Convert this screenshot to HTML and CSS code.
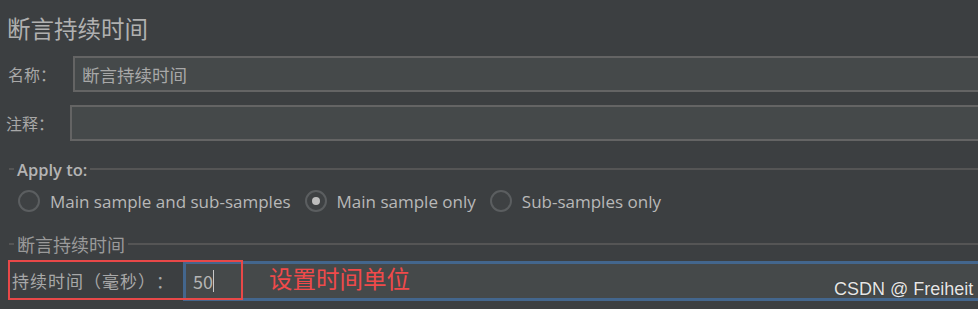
FILE: index.html
```html
<!DOCTYPE html>
<html>
<head>
<meta charset="utf-8">
<link rel="stylesheet" href="styles.css">
</head>
<body>
<div class="page">
  <div class="title">断言持续时间</div>
  <div class="row row-name">
    <span class="label">名称：</span>
    <div class="field">断言持续时间</div>
  </div>
  <div class="row row-comment">
    <span class="label">注释：</span>
    <div class="field"></div>
  </div>
  <div class="group-head head-apply">
    <span class="dash"></span><span class="legend legend-en">Apply to:</span><span class="rule"></span>
  </div>
  <div class="radios">
    <span class="radio"></span><span class="rtext">Main sample and sub-samples</span>
    <span class="radio checked"></span><span class="rtext">Main sample only</span>
    <span class="radio"></span><span class="rtext">Sub-samples only</span>
  </div>
  <div class="group-head head-dur">
    <span class="dash"></span><span class="legend legend-cn">断言持续时间</span><span class="rule"></span>
  </div>
  <div class="row row-dur">
    <span class="label dur-label">持续时间（毫秒）：</span>
    <div class="field focused">50<span class="caret"></span></div>
    <div class="redbox"></div>
    <div class="note">设置时间单位</div>
  </div>
  <div class="watermark">CSDN @ Freiheit</div>
</div>
</body>
</html>
```
FILE: styles.css
```css
html, body {
  margin: 0;
  padding: 0;
  background: #3c3f41;
  overflow: hidden;
}
.page {
  position: relative;
  width: 978px;
  height: 309px;
  font-family: "Noto Sans CJK SC", "Open Sans", sans-serif;
  color: #b4b4b4;
  text-spacing-trim: space-all;
}
.title {
  height: 56px;
  line-height: 56px;
  padding-left: 7px;
  font-size: 23.5px;
  color: #b0b0b0;
}
.row {
  display: flex;
  align-items: center;
  height: 36px;
}
.label {
  font-size: 16px;
  color: #a8a8a8;
  white-space: nowrap;
}
.field {
  flex: 1;
  height: 100%;
  box-sizing: border-box;
  background: #45494a;
  border: 2px solid #646464;
  margin-right: -20px;
  font-size: 17.5px;
  color: #a8a8a8;
  display: flex;
  align-items: center;
  padding-left: 7px;
}
.row-name .label { padding-left: 8px; width: 65px; }
.row-comment { margin-top: 13px; }
.row-comment .label { padding-left: 6px; width: 64px; }
.group-head {
  display: flex;
  align-items: center;
  height: 20px;
  padding-left: 9px;
}
.head-apply { margin-top: 18px; }
.dash {
  width: 5px;
  height: 2px;
  background: #555;
}
.rule {
  flex: 1;
  height: 2px;
  background: #555;
}
.legend {
  padding: 0 3px;
  white-space: nowrap;
}
.legend-en {
  font-family: "Open Sans", sans-serif;
  font-weight: 600;
  font-size: 16.5px;
  color: #b4b4b4;
}
.legend-cn {
  font-size: 18px;
  color: #9a9a9a;
}
.radios {
  display: flex;
  align-items: center;
  height: 30px;
  margin-top: 7px;
  padding-left: 18px;
  font-family: "Open Sans", sans-serif;
  font-size: 17px;
  color: #b8b8b8;
}
.radio {
  width: 22px;
  height: 22px;
  box-sizing: border-box;
  border: 2px solid #5b5e60;
  border-radius: 50%;
  background: #3e4143;
  margin-right: 10px;
  position: relative;
}
.radio.checked::after {
  content: "";
  position: absolute;
  left: 5px;
  top: 5px;
  width: 8px;
  height: 8px;
  border-radius: 50%;
  background: #bdbdbd;
}
.rtext { margin-right: 14px; white-space: nowrap; }
.head-dur { margin-top: 18px; }
.row-dur {
  position: relative;
  margin-top: 6px;
  height: 40px;
  align-items: stretch;
}
.dur-label {
  padding-left: 12px;
  width: 171px;
  font-size: 17px;
  letter-spacing: 1px;
  display: flex;
  align-items: center;
}
.field.focused {
  margin-top: 1px;
  margin-bottom: 2px;
  border: 3px solid #43668d;
  padding-left: 7px;
  font-size: 18px;
  color: #b4b4b4;
}
.caret {
  display: inline-block;
  width: 1px;
  height: 22px;
  background: #c8c8c8;
  margin-left: 0;
}
.redbox {
  position: absolute;
  left: 8px;
  top: 0;
  width: 235px;
  height: 40px;
  box-sizing: border-box;
  border: 2px solid #e84848;
}
.note {
  position: absolute;
  left: 269px;
  top: 2px;
  font-size: 23.5px;
  line-height: 32px;
  color: #f04a4a;
}
.watermark {
  position: absolute;
  left: 834px;
  top: 279px;
  font-family: "Liberation Sans", sans-serif;
  font-size: 18px;
  color: #e6e6e6;
  text-shadow: 0 0 1px #222;
  white-space: nowrap;
}
```
